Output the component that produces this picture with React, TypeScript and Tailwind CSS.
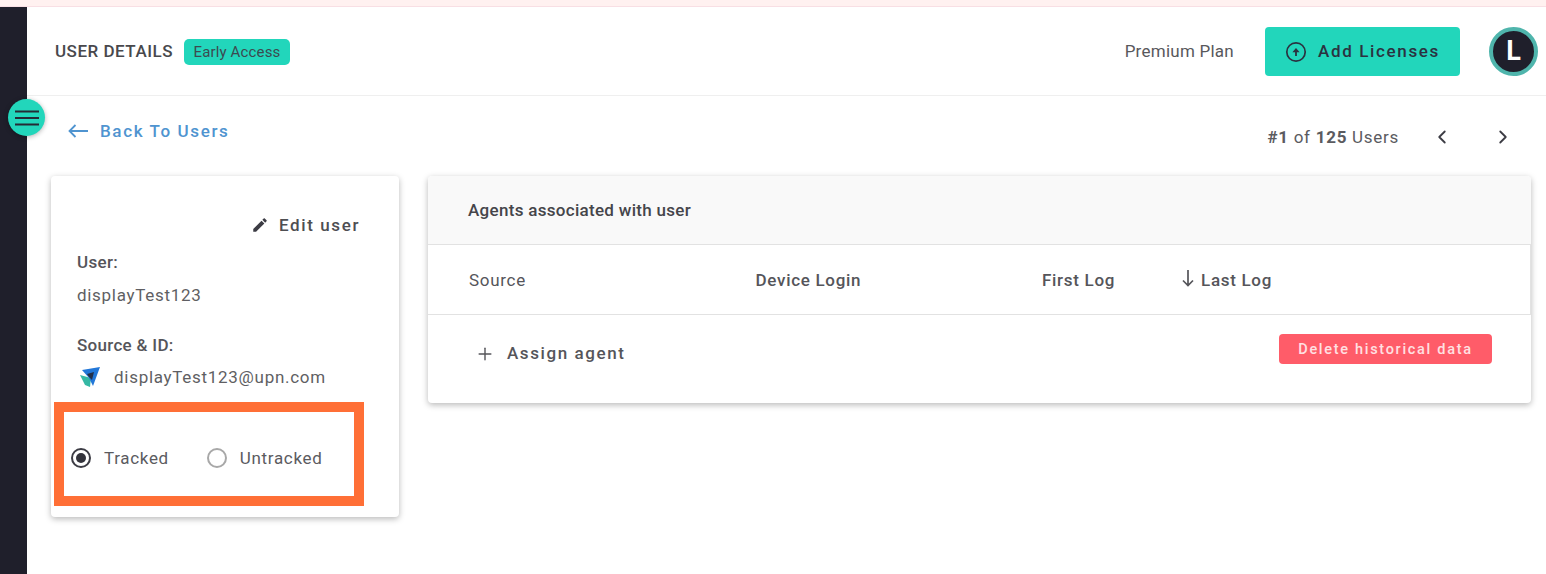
import { ChevronLeft, ChevronRight, Plus } from "lucide-react";

function Radio({ label, checked = false }: { label: string; checked?: boolean }) {
    return (
        <label className="flex items-center gap-[13px]">
            <span className={`w-[20px] h-[20px] rounded-full border-2 flex items-center justify-center ${checked ? "border-[#3c3c44]" : "border-[#a8a8a8]"}`}>
                {checked && <span className="w-[10px] h-[10px] rounded-full bg-[#33333b]" />}
            </span>
            <span className="text-[17px] leading-6 tracking-[0.67px] text-[#5b5b5f]">{label}</span>
        </label>
    );
}

function SourceLogo() {
    return (
        <svg width="22" height="22" viewBox="0 0 22 22" className="ml-[2px]">
            <polygon points="1,9 12,12 11,21 6,19" fill="#35b8a4" />
            <polygon points="3,4 21,1 14,20 10,12" fill="#2277d8" />
            <polygon points="8,8 15,6 13,14 10,11" fill="#23304a" />
        </svg>
    );
}

export default function App() {
    return (
        <div className="relative w-[1546px] h-[574px] overflow-hidden flex flex-col bg-white font-['Roboto',sans-serif]">
            <div className="h-[7px] shrink-0 bg-[#fff1f0] border-b border-[#f8dfe4]" />

            <div className="flex-1 flex min-h-0">
                <aside className="w-[27px] shrink-0 bg-[#1f1f2b]" />

                <main className="flex-1 min-w-0">
                    <header className="h-[89px] border-b border-[#efefef] flex items-center pl-[28px] pr-[8px]">
                        <h1 className="text-[17px] font-medium tracking-[0.5px] text-[#48484c] leading-6">USER DETAILS</h1>
                        <span className="ml-[11px] mt-[2px] h-[26px] w-[106px] rounded-[5px] bg-[#22d6bb] flex items-center justify-center text-[15px] tracking-[0.15px] text-[#3c4a50]">Early Access</span>

                        <span className="ml-auto text-[17px] leading-6 tracking-[0.25px] text-[#58585c]">Premium Plan</span>
                        <button className="ml-[31px] w-[195px] h-[49px] pt-[2px] rounded-[4px] bg-[#22d6bb] flex items-center justify-center gap-[11px] text-[17px] font-medium tracking-[1.63px] text-[#2b3240]">
                            <svg width="22" height="22" viewBox="0 0 22 22" fill="none" stroke="#2b3240">
                                <circle cx="11" cy="11" r="9.2" strokeWidth="1.7" />
                                <path d="M11 15V10" strokeWidth="1.8" />
                                <path d="M7.4 11.2L11 7l3.6 4.2z" fill="#2b3240" stroke="none" />
                            </svg>
                            Add Licenses
                        </button>
                        <div className="ml-[29px] w-[49px] h-[49px] rounded-full bg-[#1f1f2b] border-[4px] border-[#4fb5ac] flex items-center justify-center text-[27px] font-bold text-white">L</div>
                    </header>

                    <div className="flex items-start justify-between pl-[41px] pr-[32px]">
                        <a className="mt-[23px] flex items-center gap-[12px] text-[17px] leading-6 font-medium tracking-[1.63px] text-[#4f94d0]">
                            <svg width="20" height="14" viewBox="0 0 20 14" fill="none" stroke="#4f94d0" strokeWidth="1.8">
                                <path d="M20 7H1.5M7.5 1L1.5 7l6 6" />
                            </svg>
                            Back To Users
                        </a>
                        <div className="mt-[29px] flex items-center text-[17px] leading-6 tracking-[0.72px] text-[#5b5b5f]">
                            <span><b className="font-bold">#1</b> of <b className="font-bold">125</b> Users</span>
                            <ChevronLeft size={22} strokeWidth={2} className="ml-[32px] text-[#3c3c44]" />
                            <ChevronRight size={22} strokeWidth={2} className="ml-[39px] text-[#3c3c44]" />
                        </div>
                    </div>

                    <div className="mt-[27px] flex items-start pl-[24px] pr-[15px] gap-[29px]">
                        <section className="w-[348px] h-[341px] shrink-0 rounded-[4px] bg-white shadow-[0_2px_6px_rgba(0,0,0,0.28)] px-[26px] pt-[37px]">
                            <div className="flex justify-end items-center gap-[10px] pr-[13px] text-[17px] leading-6 tracking-[1.6px] text-[#4e4e52] font-medium">
                                <svg width="18" height="18" viewBox="0 0 24 24" fill="#3c3c44">
                                    <path d="M3 17.25V21h3.75L17.81 9.94l-3.75-3.75L3 17.25zM20.71 7.04c.39-.39.39-1.02 0-1.41l-2.34-2.34c-.39-.39-1.02-.39-1.41 0l-1.83 1.83 3.75 3.75 1.83-1.83z" />
                                </svg>
                                Edit user
                            </div>
                            <p className="mt-[13px] text-[17px] leading-6 tracking-[0.3px] font-medium text-[#55555a]">User:</p>
                            <p className="mt-[9px] text-[17px] leading-6 tracking-[0.7px] text-[#5f5f63]">displayTest123</p>
                            <p className="mt-[26px] text-[17px] leading-6 tracking-[0.3px] font-medium text-[#55555a]">Source &amp; ID:</p>
                            <div className="mt-[8px] flex items-center gap-[13px] text-[17px] leading-6 tracking-[0.71px] text-[#5f5f63]">
                                <SourceLogo />
                                displayTest123@upn.com
                            </div>
                            <div className="mt-[57px] -ml-[6px] flex items-center gap-[38px]">
                                <Radio label="Tracked" checked />
                                <Radio label="Untracked" />
                            </div>
                        </section>

                        <section className="flex-1 h-[227px] rounded-[4px] bg-white shadow-[0_2px_6px_rgba(0,0,0,0.28)] overflow-hidden">
                            <div className="h-[69px] pt-[2px] bg-[#f9f9f9] border-b border-[#e2e2e2] flex items-center pl-[40px] text-[17px] font-medium tracking-[0.3px] text-[#45454a]">Agents associated with user</div>
                            <div className="h-[70px] pt-[2px] border-b border-r border-[#e2e2e2] grid grid-cols-[286.5px_286.5px_140px_1fr] items-center pl-[41px] text-[17px] tracking-[0.7px] text-[#55555a]">
                                <span>Source</span>
                                <span className="font-medium">Device Login</span>
                                <span className="font-medium">First Log</span>
                                <span className="flex items-center gap-[7px] font-medium">
                                    <svg width="12" height="17" viewBox="0 0 12 17" fill="none" stroke="#55555a" strokeWidth="1.7" className="-mt-[5px]">
                                        <path d="M6 0v15.5M1 10.5l5 5 5-5" />
                                    </svg>
                                    Last Log
                                </span>
                            </div>
                            <div className="flex items-start justify-between pl-[47px] pr-[39px] pt-[19px]">
                                <div className="mt-[5px] h-[30px] flex items-center gap-[12px] text-[17px] font-medium tracking-[1.58px] text-[#55555a]">
                                    <Plus size={20} strokeWidth={1.7} />
                                    Assign agent
                                </div>
                                <button className="w-[213px] h-[30px] pt-[1px] rounded-[4px] bg-[#ff5c69] text-[14.5px] font-medium tracking-[1.7px] text-[#ffe0e2]">Delete historical data</button>
                            </div>
                        </section>
                    </div>
                </main>
            </div>

            {/* floating toggle over the sidebar edge */}
            <button className="absolute left-[8px] top-[99px] w-[37px] h-[37px] rounded-full bg-[#22d6bb] shadow-[0_1px_5px_rgba(0,0,0,0.3)] flex items-center justify-center">
                <svg width="24" height="16" viewBox="0 0 24 16" stroke="#252a35" strokeWidth="2.2">
                    <path d="M0 1.5h24M0 8h24M0 14.5h24" />
                </svg>
            </button>

            {/* orange annotation drawn over the screenshot */}
            <div className="absolute left-[54px] top-[402px] w-[310px] h-[104px] border-[10px] border-[#ff6f36]" />
        </div>
    );
}
